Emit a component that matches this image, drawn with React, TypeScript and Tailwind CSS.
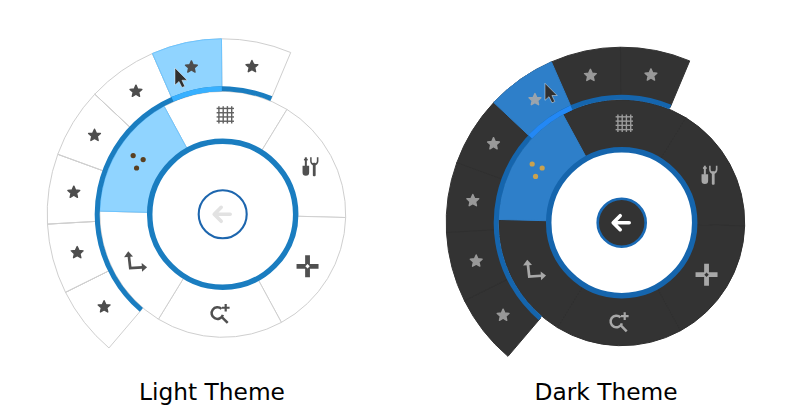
import React from 'react';

type Theme = {
  fill: string;
  line: string;
  outerLine: string;
  hlFill: string;
  hlLine: string;
  ring: string;
  hlRing: string;
  star: string;
  icon: string;
  hlStar: string;
  dots: string;
  backFill: string;
  backStroke: string;
  backWidth: number;
  arrow: string;
  hlSub: number;
};

const lightTheme: Theme = {
  fill: '#ffffff',
  line: '#cfcfcf',
  outerLine: '#cfcfcf',
  hlFill: '#90d4ff',
  hlLine: '#6cc4ff',
  ring: '#1a7dc0',
  hlRing: '#38b0ff',
  star: '#4d4d4d',
  icon: '#505050',
  hlStar: '#4d4d4d',
  dots: '#5a4020',
  backFill: '#ffffff',
  backStroke: '#1d66ae',
  backWidth: 2.1,
  arrow: '#e2e2e2',
  hlSub: 1,
};

const darkTheme: Theme = {
  fill: '#333333',
  line: '#2f2f2f',
  outerLine: '#333333',
  hlFill: '#2e7fc9',
  hlLine: '#2e7fc9',
  ring: '#1565ad',
  hlRing: '#2388f5',
  star: '#999999',
  icon: '#a8a8a8',
  hlStar: '#9aa4ad',
  dots: '#c9a24f',
  backFill: '#333333',
  backStroke: '#1a6ab5',
  backWidth: 2.6,
  arrow: '#ffffff',
  hlSub: 2,
};

const pt = (r: number, a: number): [number, number] => {
  const t = (a * Math.PI) / 180;
  return [r * Math.sin(t), -r * Math.cos(t)];
};

const arc = (r: number, a0: number, a1: number) => {
  const [x0, y0] = pt(r, a0);
  const [x1, y1] = pt(r, a1);
  return `M${x0} ${y0}A${r} ${r} 0 ${a1 - a0 > 180 ? 1 : 0} 1 ${x1} ${y1}`;
};

const slice = (r0: number, r1: number, a0: number, a1: number) => {
  const [x0, y0] = pt(r1, a0);
  const [x1, y1] = pt(r1, a1);
  const [x2, y2] = pt(r0, a1);
  const [x3, y3] = pt(r0, a0);
  return `M${x0} ${y0}A${r1} ${r1} 0 0 1 ${x1} ${y1}L${x2} ${y2}A${r0} ${r0} 0 0 0 ${x3} ${y3}Z`;
};

const starPoints = () => {
  const out: string[] = [];
  for (let i = 0; i < 10; i++) {
    const [x, y] = pt(i % 2 ? 2.9 : 6.2, i * 36);
    out.push(`${x},${y}`);
  }
  return out.join(' ');
};

const Star = ({ x, y, color }: { x: number; y: number; color: string }) => (
  <polygon
    points={starPoints()}
    transform={`translate(${x} ${y})`}
    fill={color}
    stroke={color}
    strokeWidth={1.4}
    strokeLinejoin="round"
  />
);

const MainIcon = ({ kind, color, dots }: { kind: number; color: string; dots: string }) => {
  if (kind === 0) {
    // grid
    const ticks = [-6.4, -2.1, 2.1, 6.4];
    return (
      <g stroke={color} strokeWidth={1.4} opacity={0.9}>
        {ticks.map((t) => (
          <React.Fragment key={t}>
            <line x1={t} y1={-8.7} x2={t} y2={8.7} />
            <line x1={-8.7} y1={t} x2={8.7} y2={t} />
          </React.Fragment>
        ))}
      </g>
    );
  }
  if (kind === 1) {
    // shovel + wrench
    return (
      <g fill={color} stroke="none">
        <rect x={-5.3} y={-9.5} width={2} height={9} />
        <rect x={-6.2} y={-8} width={3.8} height={1.6} />
        <path d="M-7.6 -1h6.6v6.6a3.3 3.3 0 0 1 -6.6 0z" />
        <rect x={2.7} y={-4} width={2.8} height={13.5} rx={1} />
        <path d="M0 -9.5h1.5v3.4a2.6 2.6 0 0 0 5.2 0v-3.4h1.6v4a4.1 4.1 0 0 1 -8.3 0z" />
      </g>
    );
  }
  if (kind === 2) {
    // move
    return (
      <path
        fill={color}
        fillRule="evenodd"
        d="M-2.4 -11h4.8v8.6h8.6v4.8h-8.6v8.6h-4.8v-8.6h-8.6v-4.8h8.6zM0 -2.2L-2.2 0L0 2.2L2.2 0z"
      />
    );
  }
  if (kind === 3) {
    // zoom in
    return (
      <g fill="none" stroke={color} strokeWidth={2.5}>
        <path d="M1.4 -4.8A5.8 5.8 0 1 0 2.8 1.2" />
        <path d="M1.5 3L7.6 9.2" strokeWidth={2.5} />
        <path d="M5.6 -9.8v7.6M1.9 -6h7.6" strokeWidth={2.2} />
      </g>
    );
  }
  if (kind === 4) {
    // axis arrows
    return (
      <g>
        <path d="M-6.4 -6L-5 6.4L7 5.6" fill="none" stroke={color} strokeWidth={2.7} />
        <path d="M-7 -10.5L-2.2 -5.2L-11.2 -4.6z" fill={color} />
        <path d="M11.8 5.4L6.4 1.2L6.8 10z" fill={color} />
      </g>
    );
  }
  // three dots
  return (
    <g fill={dots}>
      <circle cx={-4.7} cy={-6.7} r={2.6} />
      <circle cx={5.3} cy={-2.7} r={2.6} />
      <circle cx={-1.3} cy={5.7} r={2.6} />
    </g>
  );
};

const Wheel = ({ t, width, cx, cy, cursor }: { t: Theme; width: number; cx: number; cy: number; cursor: [number, number] }) => {
  const subStart = -139.6;
  const subStep = 23.2;
  const subs = Array.from({ length: 7 }, (_, i) => subStart + i * subStep);
  const mains = Array.from({ length: 6 }, (_, i) => -28.5 + i * 60);
  const hlA = subs[6 - t.hlSub];

  return (
    <svg width={width} height={368} viewBox={`${-cx} ${-cy} ${width} 368`} className="block">
      {/* submenu slices */}
      {subs.map((a) => (
        <path key={a} d={slice(125, 175.5, a, a + subStep)} fill={t.fill} stroke={t.outerLine} strokeWidth={1} />
      ))}
      {subs.slice(1).map((a) => (
        <line
          key={a}
          x1={pt(125, a)[0]}
          y1={pt(125, a)[1]}
          x2={pt(175.5, a)[0]}
          y2={pt(175.5, a)[1]}
          stroke={t.line}
          strokeWidth={1}
        />
      ))}
      <path d={slice(125, 175.5, hlA, hlA + subStep)} fill={t.hlFill} stroke={t.hlLine} strokeWidth={1} />
      {subs.map((a, i) => {
        const [x, y] = pt(150.5, a + subStep / 2);
        return <Star key={a} x={x} y={y} color={i === 6 - t.hlSub ? t.hlStar : t.star} />;
      })}

      {/* main slices */}
      {mains.map((a) => (
        <path key={a} d={slice(73, 123, a, a + 60)} fill={t.fill} stroke={t.line} strokeWidth={1} />
      ))}
      <path d={slice(73, 123, -88.5, -28.5)} fill={t.hlFill} stroke={t.hlLine} strokeWidth={1} />
      {[1.5, 61.5, 121.5, 181.5, 241.5, 301.5].map((a, i) => {
        const [x, y] = pt(99.5, a);
        return (
          <g key={a} transform={`translate(${x} ${y})`}>
            <MainIcon kind={i} color={t.icon} dots={t.dots} />
          </g>
        );
      })}

      {/* rings */}
      <path d={arc(125.5, subStart, subStart + 7 * subStep)} fill="none" stroke={t.ring} strokeWidth={5} />
      <path d={arc(125.5, hlA, hlA + subStep)} fill="none" stroke={t.hlRing} strokeWidth={5} />
      <circle r={73} fill="#ffffff" stroke={t.ring} strokeWidth={5.5} />

      {/* back button */}
      <circle r={24} fill={t.backFill} stroke={t.backStroke} strokeWidth={t.backWidth} />
      <path
        d="M-1.5 -7L-8.5 0L-1.5 7M-8 0H7.5"
        fill="none"
        stroke={t.arrow}
        strokeWidth={3.6}
        strokeLinecap="round"
        strokeLinejoin="round"
      />

      {/* cursor */}
      <path
        transform={`translate(${cursor[0]} ${cursor[1]})`}
        d="M0 0V17L4 13.4L7 19.5L9.8 18.2L6.9 12.2H12.2z"
        fill="#2f2f2f"
        stroke="#ffffff"
        strokeOpacity={0.55}
        strokeWidth={0.8}
      />
    </svg>
  );
};

export default function App() {
  return (
    <div className="flex w-[800px] h-[409px] overflow-hidden bg-white font-['DejaVu_Sans',sans-serif] text-black">
      <div className="flex flex-col w-[424px]">
        <Wheel t={lightTheme} width={424} cx={222.7} cy={214.3} cursor={[-47.7, -146.3]} />
        <div className="text-center text-[23.3px] leading-[28px] mt-[10px]">Light Theme</div>
      </div>
      <div className="flex flex-col w-[364px]">
        <Wheel t={darkTheme} width={364} cx={197.7} cy={222.7} cursor={[-76.7, -139.4]} />
        <div className="text-center text-[23.3px] leading-[28px] mt-[10px]">Dark Theme</div>
      </div>
    </div>
  );
}
